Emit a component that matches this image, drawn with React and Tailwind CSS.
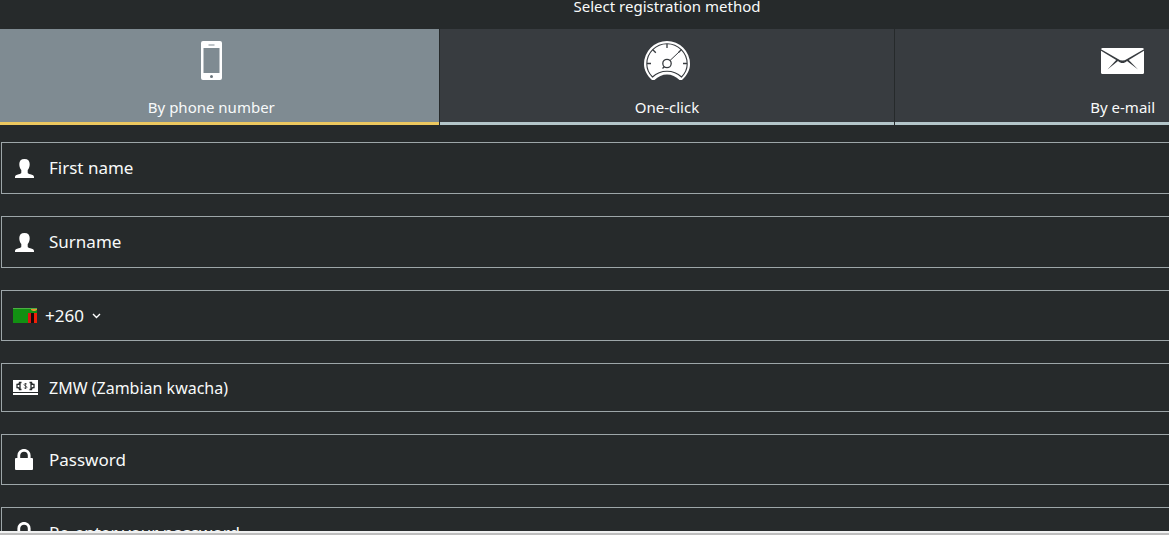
import React, { useState } from 'react';

const PhoneIcon = () => (
  <svg width="21" height="39" viewBox="0 0 21 39" aria-hidden="true">
    <path
      fill="#fff"
      fillRule="evenodd"
      d="M2 0h17A2 2 0 0 1 21 2v35a2 2 0 0 1-2 2H2A2 2 0 0 1 0 37V2A2 2 0 0 1 2 0zM2.500 7v25h16V7zM7.500 3.500v1h6v-1z"
    />
    <circle cx="10.500" cy="35.500" r="1.500" fill="#69747b" />
  </svg>
);

const GaugeIcon = () => (
  <svg width="46" height="39" viewBox="0 0 46 39" aria-hidden="true">
    <path fill="#fff" d="M8 39C3 34.500 0 29 0 23a23 23 0 0 1 46 0c0 6-3 11.500-8 16h-2.500c-7-7.500-18-7.500-25 0z" />
    <g fill="none" stroke="#383c40">
      <path strokeWidth="1.100" d="M8.500 36C5 32.500 2.800 28 2.800 23a20.200 20.200 0 0 1 40.400 0c0 5-2.200 9.500-5.700 13-8-7.700-21-7.700-29 0z" />
      <path strokeWidth="1.300" d="M3 22.500h4M43 22.500h-4M23 3v4M8.800 8.800l3 3M37.500 8.500l-3 3" />
      <path strokeWidth="1" d="M35 11l-9 8.500" />
      <circle cx="23" cy="22.500" r="4.200" strokeWidth="1.300" />
      <path strokeWidth="1.300" d="M18.500 27.500l2-2" />
    </g>
  </svg>
);

const MailIcon = () => (
  <svg width="43" height="26" viewBox="0 0 43 26" aria-hidden="true">
    <rect width="43" height="26" rx="1.500" fill="#fff" />
    <path fill="#383c40" d="M0 1.200l17 9.800c3 2 6 2 9 0L43 1.200v1.600L27.800 12 37 21.500l-11-8.600c-3 2.800-6 2.800-9 0L6.500 21.500 15.200 12 0 2.800z" />
  </svg>
);

const UserIcon = () => (
  <svg width="19" height="19" viewBox="0 0 19 19" fill="#fff" aria-hidden="true">
    <path d="M9.500 0c3.500 0 5.200 1.900 5.200 5 0 2.700-.8 4.700-2 6v2.500c0 1 .9 1.400 2.600 1.800 2.400.6 3.700 1.200 3.700 2.700v1H0v-1c0-1.500 1.300-2.100 3.700-2.700 1.700-.4 2.600-.8 2.600-1.800V11c-1.200-1.300-2-3.300-2-6 0-3.100 1.700-5 5.200-5z" />
  </svg>
);

const LockIcon = () => (
  <svg width="18" height="21" viewBox="0 0 18 21" aria-hidden="true">
    <path fill="none" stroke="#fff" strokeWidth="2.800" d="M3.800 10V6.500a5.200 5.200 0 0 1 10.400 0V10" />
    <rect y="9" width="18" height="12" rx="1" fill="#fff" />
  </svg>
);

const MoneyIcon = () => (
  <svg width="25" height="15" viewBox="0 0 25 15" aria-hidden="true">
    <path fill="#fff" d="M0 0h25v12H0zM0 13h25v2H0z" />
    <g fill="none" stroke="#262a2b" strokeWidth="1.300">
      <path d="M8.500 2.500H6.500c0 1.300-.8 2-2.500 2v3c1.700 0 2.500.7 2.500 2h2M7 3v6" />
      <path d="M16.500 2.500h2c0 1.300.8 2 2.500 2v3c-1.700 0-2.500.7-2.500 2h-2M18 3v6" />
      <path strokeWidth=".7" d="M14 4.200c-.8-.8-3-.8-3 .5 0 1.600 3 .9 3 2.500 0 1.300-2.300 1.300-3.200.5M12.500 3v6" />
    </g>
  </svg>
);

const ZambiaFlag = () => (
  <svg width="24" height="15" viewBox="0 0 24 15" aria-hidden="true">
    <path fill="#129012" d="M0 0h24v15H0z" />
    <path fill="#4caf43" d="M0 0h24v1H0z" />
    <path fill="#e01010" d="M15 5h3v10h-3z" />
    <path fill="#160b08" d="M18 5h3v10h-3z" />
    <path fill="#ef2008" d="M21 5h3v10h-3z" />
    <path fill="#e89030" d="M18 1h6v1l-2 1h-2l-2-1z" />
  </svg>
);

const tabs = [
  { id: 'phone', label: 'By phone number', icon: <PhoneIcon /> },
  { id: 'click', label: 'One-click', icon: <GaugeIcon /> },
  { id: 'mail', label: 'By e-mail', icon: <MailIcon /> },
];

const Field = ({ id, label, type = 'text', icon, className }) => (
  <div className={`flex items-center border border-[#9da6a9] pl-3 ${className}`}>
    <label htmlFor={id} className="flex w-[35px] shrink-0 pl-px" aria-label={label}>
      {icon}
    </label>
    <input
      id={id}
      type={type}
      placeholder={label}
      className="h-full min-w-0 flex-1 bg-transparent pb-px text-[17px] text-white outline-none placeholder:text-[#f8fafa]"
    />
  </div>
);

const App = () => {
  const [active, setActive] = useState('phone');

  return (
    <div className="flex h-screen flex-col bg-[#262a2b] font-['Noto_Sans','Open_Sans',sans-serif] text-[#f8fafa]">
      <div className="min-h-0 flex-1 overflow-hidden">
        {/* the form is wider than the window and scrolled a little to the right */}
        <div className="-ml-4 w-[calc(100%+197px)]">
          <h1 className="flex h-[29px] items-start justify-center text-[15px] leading-3">
            Select registration method
          </h1>

          {/* Registration methods */}
          <div className="grid grid-cols-3 gap-px">
            {tabs.map((tab) => (
              <button
                key={tab.id}
                type="button"
                onClick={() => setActive(tab.id)}
                className={`flex h-24 flex-col items-center border-b-3 pt-3 text-[15px] leading-5 ${
                  active === tab.id ? 'border-[#edc85f] bg-[#7f8b92]' : 'border-[#b4c6ca] bg-[#383c40]'
                }`}
              >
                <span className="flex h-[39px] items-center">{tab.icon}</span>
                <span className="mt-[17px]">{tab.label}</span>
              </button>
            ))}
          </div>

          {/* Form */}
          <form className="ml-[17px] mt-[17px] flex flex-col gap-[22px]">
            <Field id="first-name" label="First name" icon={<UserIcon />} className="h-[52px]" />
            <Field id="surname" label="Surname" icon={<UserIcon />} className="h-[52px]" />

            <div className="flex h-[51px] items-center border border-[#9da6a9] pl-[11px]">
              <button type="button" aria-label="Country code" className="flex items-center text-[17px]">
                <ZambiaFlag />
                <span className="ml-2">+260</span>
                <svg width="9" height="6" viewBox="0 0 9 6" className="ml-2" aria-hidden="true">
                  <path fill="none" stroke="#fff" strokeWidth="1.400" d="M1 1l3.500 3.500L8 1" />
                </svg>
              </button>
              <input type="tel" aria-label="Phone number" className="h-full min-w-0 flex-1 bg-transparent pl-3 text-[17px] outline-none" />
            </div>

            <div className="flex h-[49px] items-center border border-[#9da6a9] pl-[11px]">
              <label htmlFor="currency" className="flex w-9 shrink-0" aria-label="Currency">
                <MoneyIcon />
              </label>
              <select id="currency" className="h-full min-w-0 flex-1 appearance-none bg-transparent text-base outline-none">
                <option>ZMW (Zambian kwacha)</option>
              </select>
            </div>

            <Field id="password" label="Password" type="password" icon={<LockIcon />} className="h-[51px]" />
            <Field id="password-repeat" label="Re-enter your password" type="password" icon={<LockIcon />} className="h-[51px]" />
          </form>
        </div>
      </div>
      <div className="h-1 shrink-0 border-t-2 border-[#f0f1f1] bg-[#bdbdbd]"></div>
    </div>
  );
};

export default App;
